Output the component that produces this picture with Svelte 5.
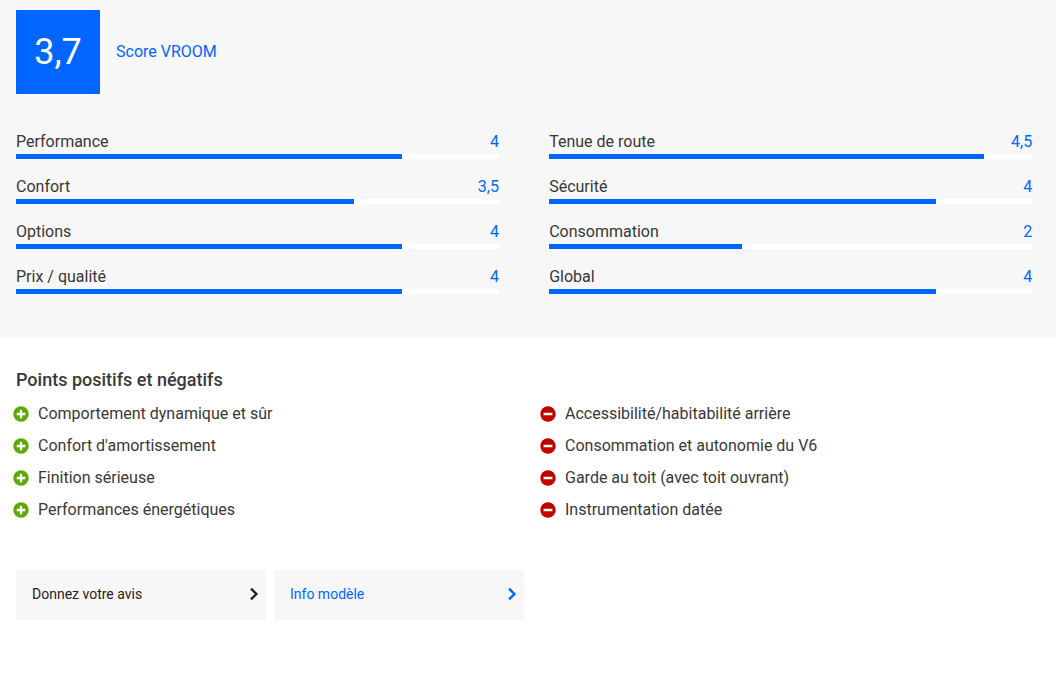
<script>
	const leftScores = [
		{ label: 'Performance', value: 4 },
		{ label: 'Confort', value: 3.5 },
		{ label: 'Options', value: 4 },
		{ label: 'Prix / qualité', value: 4 }
	];
	const rightScores = [
		{ label: 'Tenue de route', value: 4.5 },
		{ label: 'Sécurité', value: 4 },
		{ label: 'Consommation', value: 2 },
		{ label: 'Global', value: 4 }
	];
	const positives = [
		'Comportement dynamique et sûr',
		"Confort d'amortissement",
		'Finition sérieuse',
		'Performances énergétiques'
	];
	const negatives = [
		'Accessibilité/habitabilité arrière',
		'Consommation et autonomie du V6',
		'Garde au toit (avec toit ouvrant)',
		'Instrumentation datée'
	];

	const fmt = (v) => String(v).replace('.', ',');
</script>

{#snippet scores(list)}
	<div class="col">
		{#each list as s}
			<div class="score">
				<div class="score-head">
					<span>{s.label}</span>
					<span class="val">{fmt(s.value)}</span>
				</div>
				<div class="track"><div class="fill" style="width: {(s.value / 5) * 100}%"></div></div>
			</div>
		{/each}
	</div>
{/snippet}

{#snippet chevron()}
	<svg width="10" height="14" viewBox="0 0 10 14">
		<path d="M2 1.6l5.4 5.4-5.4 5.4" fill="none" stroke="currentColor" stroke-width="2.4" />
	</svg>
{/snippet}

<section class="rating">
	<div class="total">
		<div class="badge">3,7</div>
		<span class="total-label">Score VROOM</span>
	</div>
	<div class="grid">
		{@render scores(leftScores)}
		{@render scores(rightScores)}
	</div>
</section>

<section class="points">
	<h3>Points positifs et négatifs</h3>
	<div class="lists">
		<ul>
			{#each positives as p}
				<li>
					<svg class="ico" width="16" height="16" viewBox="0 0 16 16">
						<circle cx="8" cy="8" r="7.7" fill="#5fa800" />
						<path d="M3.7 8h8.6M8 3.7v8.6" stroke="#fff" stroke-width="2.3" />
					</svg>
					{p}
				</li>
			{/each}
		</ul>
		<ul class="neg">
			{#each negatives as n}
				<li>
					<svg class="ico" width="16" height="16" viewBox="0 0 16 16">
						<circle cx="8" cy="8" r="7.7" fill="#c00000" />
						<path d="M3.6 8h8.8" stroke="#fff" stroke-width="2.5" />
					</svg>
					{n}
				</li>
			{/each}
		</ul>
	</div>
	<div class="buttons">
		<a class="btn" href="#avis">Donnez votre avis {@render chevron()}</a>
		<a class="btn blue" href="#info">Info modèle {@render chevron()}</a>
	</div>
</section>

<style>
	:global(body) {
		margin: 0;
		background: #fff;
		font-family: Roboto, sans-serif;
		color: #383838;
	}

	.rating {
		background: #f7f7f7;
		height: 338px;
		box-sizing: border-box;
		padding: 10px 24px 0 16px;
	}

	.total {
		display: flex;
		align-items: center;
		gap: 16px;
	}

	.badge {
		width: 84px;
		height: 84px;
		background: #0066ff;
		color: #fff;
		font-size: 36px;
		line-height: 84px;
		text-align: center;
	}

	.total-label {
		color: #0066ff;
		font-size: 16px;
		padding-bottom: 2px;
	}

	.grid {
		display: grid;
		grid-template-columns: 483px 483px;
		column-gap: 50.2px;
		margin-top: 36px;
	}

	.score {
		height: 45px;
	}

	.score-head {
		display: flex;
		justify-content: space-between;
		font-size: 16px;
		line-height: 19px;
		height: 24px;
		padding-top: 2px;
		box-sizing: border-box;
	}

	.val {
		color: #0066ff;
	}

	.track {
		height: 5px;
		background: #fff;
	}

	.fill {
		height: 100%;
		background: #0066ff;
	}

	.points {
		padding: 31px 16px 0;
	}

	h3 {
		margin: 0;
		font-size: 18px;
		font-weight: 500;
		line-height: 21px;
	}

	.lists {
		display: flex;
		margin: 7px 0 0 -3px;
	}

	ul {
		list-style: none;
		margin: 0;
		padding: 0;
		flex: 0 0 527px;
	}

	li {
		display: flex;
		align-items: center;
		gap: 9px;
		height: 32px;
		font-size: 16px;
	}

	.ico {
		flex: none;
		margin-top: 2px;
	}

	.buttons {
		display: flex;
		gap: 8px;
		margin-top: 45px;
	}

	.btn {
		display: flex;
		align-items: center;
		justify-content: space-between;
		width: 250px;
		height: 50px;
		box-sizing: border-box;
		padding: 0 7px 2px 16px;
		background: #f7f7f7;
		color: #383838;
		font-size: 14px;
		text-decoration: none;
	}

	.btn:first-child {
		color: #222;
	}

	.btn.blue {
		color: #0066ff;
	}
</style>
